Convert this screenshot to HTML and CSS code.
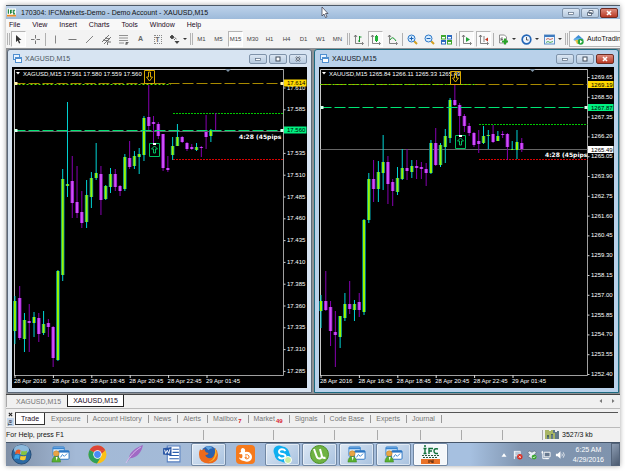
FILE: index.html
```html
<!DOCTYPE html>
<html lang="en">
<head>
    <meta charset="UTF-8">
    <meta name="viewport" content="width=device-width, initial-scale=1.0">
    <title>170304: IFCMarkets-Demo - Demo Account - XAUUSD,M15</title>
    <link rel="stylesheet" href="styles.css">
</head>
<body>
    <svg class="defs" aria-hidden="true">
        <symbol id="ico-window" viewBox="0 0 9 9">
            <rect x="0.5" y="0.5" width="6" height="5" fill="#e8f3ff" stroke="#4f8fd0"/>
            <rect x="2.5" y="3.5" width="6" height="5" fill="#fff" stroke="#4f8fd0"/>
            <path d="M2.5 4.5h6" stroke="#4f8fd0"/>
        </symbol>
        <symbol id="ico-mt4" viewBox="0 0 20 18">
            <rect x="2" y="1" width="12" height="10" rx="1" fill="#dff0ff" stroke="#3a86d0"/>
            <path d="M2 2.500h12" stroke="#3a86d0" stroke-width="2"/>
            <rect x="8" y="5" width="11" height="9" rx="1" fill="#fff" stroke="#2a76c4"/>
            <path d="M8 6h11" stroke="#2a76c4" stroke-width="2"/>
            <path d="M10 12l2-3 2 2 3-3" stroke="#3a86d0" fill="none"/>
            <circle cx="5.500" cy="8" r="3" fill="#e9a545" stroke="#b87820" stroke-width=".5"/>
            <path d="M1 17c0-4 2-6 4.500-6s4.500 2 4.500 6z" fill="#58b030" stroke="#357d18" stroke-width=".5"/>
            <path d="M5 11.500l1 4 1-4z" fill="#fff"/>
        </symbol>
    </svg>

    <div class="screen">
        <header class="titlebar">
            <svg class="app-icon" viewBox="0 0 10 9"><rect width="10" height="9" fill="#fff"/><path d="M0 7h10v2H0z" fill="#e98b2a"/><path d="M1.500 1v5M4 6V2h2M4 4h2M9 2H7.500v4H9" stroke="#16803a" stroke-width="1.300" fill="none"/></svg>
            <h1>170304: IFCMarkets-Demo - Demo Account - XAUUSD,M15</h1>
            <button class="win-btn" aria-label="Minimize"><svg viewBox="0 0 8 6"><rect x="1.500" y="2.500" width="5" height="2" fill="#fff" stroke="#5a6b80" stroke-width=".7"/></svg></button>
            <button class="win-btn" aria-label="Restore"><svg viewBox="0 0 8 6"><path d="M3 .5h4v3H3zM1.500 2.500h4v3h-4z" fill="#fff" stroke="#4d5c70" stroke-width=".8"/></svg></button>
            <button class="win-btn close" aria-label="Close"><svg viewBox="0 0 8 6"><path d="M2 1l4 4M6 1L2 5" stroke="#fff" stroke-width="1.600"/></svg></button>
            <svg class="pointer" viewBox="0 0 8 12"><path d="M1 1v9l2-2 1.500 3.500 1.500-.7L4.500 7.500H7z" fill="#fff" stroke="#334" stroke-width=".7"/></svg>
        </header>

        <nav class="menu">
            <button>File</button><button>View</button><button>Insert</button><button>Charts</button><button>Tools</button><button>Window</button><button>Help</button>
        </nav>

        <div class="toolbar">
            <i class="grip"></i>
            <button class="tool on" aria-label="Cursor"><svg viewBox="0 0 11 11"><path d="M3 1v7l1.800-1.500L6 9.500l1.300-.6L6 6h2.500z" fill="#333"/></svg></button>
            <button class="tool" aria-label="Crosshair"><svg viewBox="0 0 11 11"><path d="M5.500 1v3.500M5.500 6.500V10M1 5.500h3.500M6.500 5.500H10" stroke="#777"/></svg></button>
            <i class="sep"></i>
            <button class="tool" aria-label="Vertical line"><svg viewBox="0 0 11 11"><path d="M5.500 1.500v8" stroke="#888"/></svg></button>
            <button class="tool" aria-label="Horizontal line"><svg viewBox="0 0 11 11"><path d="M1.500 5.500h8" stroke="#777"/></svg></button>
            <button class="tool" aria-label="Trendline"><svg viewBox="0 0 11 11"><path d="M2 9l7-7" stroke="#666" stroke-width=".8"/></svg></button>
            <button class="tool" aria-label="Channel"><svg viewBox="0 0 11 11"><path d="M1 8l7-7M3 10l7-7M2 6l6 1M4 4l5 1M6.500 8H10M6.500 8v3" stroke="#555" stroke-width=".8" fill="none"/></svg></button>
            <button class="tool" aria-label="Fibonacci"><svg viewBox="0 0 11 11"><path d="M1 1.500h9M1 4h9M1 6.500h9M1 9h5" stroke="#777" stroke-width=".8"/><path d="M8 11V8.500h2.500M8 9.800h2" stroke="#444" stroke-width=".8" fill="none"/></svg></button>
            <button class="tool letter">A</button>
            <button class="tool letter"><span class="dotted">T</span></button>
            <button class="tool drop" aria-label="Arrows"><svg viewBox="0 0 11 11"><path d="M3 1l2 2-2 2-2-2zM4.500 4.500l1.500 1.500M5.500 3.500l2 1.500" fill="#444" stroke="#444" stroke-width=".8"/><path d="M5.500 7h5L8 10z" fill="#444"/></svg></button>
            <i class="grip"></i>
            <button class="tool tf">M1</button>
            <button class="tool tf">M5</button>
            <button class="tool tf on">M15</button>
            <button class="tool tf">M30</button>
            <button class="tool tf">H1</button>
            <button class="tool tf">H4</button>
            <button class="tool tf">D1</button>
            <button class="tool tf">W1</button>
            <button class="tool tf">MN</button>
            <i class="grip"></i>
            <button class="tool" aria-label="Bar chart"><svg viewBox="0 0 11 11"><path d="M2.500 1v8.500H10M1 3l1.500-2L4 3M9 8l1.500 1.500L9 11" stroke="#666" stroke-width=".8" fill="none"/><path d="M6.500 2v6M6.500 3h2M5 7h1.500" stroke="#19962c"/></svg></button>
            <button class="tool on" aria-label="Candlesticks"><svg viewBox="0 0 11 11"><path d="M2.500 1v8.500H10M1 3l1.500-2L4 3M9 8l1.500 1.500L9 11" stroke="#666" stroke-width=".8" fill="none"/><path d="M6.500 1v7" stroke="#19962c"/><path d="M5 2h3v5H5z" fill="#22b53a"/></svg></button>
            <button class="tool" aria-label="Line chart"><svg viewBox="0 0 11 11"><path d="M2.500 1v8.500H10M1 3l1.500-2L4 3M9 8l1.500 1.500L9 11" stroke="#666" stroke-width=".8" fill="none"/><path d="M3 6q2.500-5 6 1" stroke="#19962c" fill="none"/></svg></button>
            <i class="sep"></i>
            <button class="tool" aria-label="Zoom in"><svg viewBox="0 0 11 11"><path d="M7 7l3 3" stroke="#d3a020" stroke-width="2"/><circle cx="4.500" cy="4.500" r="3.500" fill="#d8edff" stroke="#2b78c8"/><path d="M2.500 4.500h4M4.500 2.500v4" stroke="#1a62b4"/></svg></button>
            <button class="tool" aria-label="Zoom out"><svg viewBox="0 0 11 11"><path d="M7 7l3 3" stroke="#d3a020" stroke-width="2"/><circle cx="4.500" cy="4.500" r="3.500" fill="#d8edff" stroke="#2b78c8"/><path d="M2.500 4.500h4" stroke="#1a62b4"/></svg></button>
            <button class="tool" aria-label="Tile windows"><svg viewBox="0 0 11 11"><path d="M0 1h5v4.500H0zM6 6h5v4.500H6z" fill="#3ea62e"/><path d="M6 1h5v4.500H6zM0 6h5v4.500H0z" fill="#2b69c0"/><path d="M1 3h3v1.500H1zM7 3h3v1.500H7zM1 8h3v1.500H1zM7 8h3v1.500H7z" fill="#fff"/></svg></button>
            <i class="sep"></i>
            <button class="tool on" aria-label="Auto scroll"><svg viewBox="0 0 11 11"><path d="M2.500 1v8.500H10M1 3l1.500-2L4 3M9 8l1.500 1.500L9 11" stroke="#666" stroke-width=".8" fill="none"/><path d="M5 3l4 2.500L5 8z" fill="#22a53a"/></svg></button>
            <button class="tool on" aria-label="Chart shift"><svg viewBox="0 0 11 11"><path d="M2.500 1v8.500H10M1 3l1.500-2L4 3M9 8l1.500 1.500L9 11M6 2v6" stroke="#666" stroke-width=".8" fill="none"/><path d="M10 3.500v4L7 5.500z" fill="#c8351e"/></svg></button>
            <i class="sep"></i>
            <button class="tool drop" aria-label="Indicators"><svg viewBox="0 0 11 11"><path d="M1.500 1h5l2 2v6h-7z" fill="#fff" stroke="#777" stroke-width=".8"/><path d="M3 7V4h2M3 5.500h2" stroke="#555" stroke-width=".8" fill="none"/><path d="M7 4.500v6M4 7.500h6" stroke="#28a428" stroke-width="2.200"/></svg></button>
            <button class="tool drop" aria-label="Periods"><svg viewBox="0 0 11 11"><circle cx="5.500" cy="5.500" r="4.300" fill="#eef6ff" stroke="#2467b8" stroke-width="1.700"/><path d="M5.500 3v3h2" stroke="#333" stroke-width=".8" fill="none"/></svg></button>
            <button class="tool drop" aria-label="Templates"><svg viewBox="0 0 11 11"><rect x=".5" y="1" width="10" height="9" fill="#eef6ff" stroke="#5c8fc8"/><path d="M.5 2h10" stroke="#3d79bd" stroke-width="2"/><path d="M2 5.500l2-1 2 1 3-1" stroke="#c04a30" stroke-width=".8" fill="none"/><path d="M2 8.500l2-1 2 1 3-1" stroke="#2f9a3a" stroke-width=".8" fill="none"/></svg></button>
            <i class="grip"></i>
            <button class="auto"><svg viewBox="0 0 11 11"><path d="M1 5l4.500-4L10 5z" fill="#3f8fd6"/><ellipse cx="5.500" cy="5.500" rx="5" ry="1.600" fill="#67aee8"/><path d="M2 6h7l-3 4H4z" fill="#e8c34c"/><circle cx="7.700" cy="7.700" r="3" fill="#24a53c"/><path d="M7 6v3.500l2.500-1.700z" fill="#fff"/></svg>AutoTrading</button>
        </div>

        <main class="workspace">
            <section class="chart-window">
                <div class="chart-title">
                    <svg class="chart-icon"><use href="#ico-window"/></svg>
                    <h2>XAGUSD,M15</h2>
                    <button class="win-btn" aria-label="Minimize"><svg viewBox="0 0 8 6"><rect x="1.500" y="2.500" width="5" height="2" fill="#fff" stroke="#5a6b80" stroke-width=".7"/></svg></button>
                    <button class="win-btn" aria-label="Maximize"><svg viewBox="0 0 8 6"><rect x="2" y="1" width="4" height="4" fill="#fff" stroke="#3f4b5a"/></svg></button>
                    <button class="win-btn" aria-label="Close"><svg viewBox="0 0 8 6"><path d="M2 1l4 4M6 1L2 5" stroke="#4d5968" stroke-width="1.800"/><path d="M2 1l4 4M6 1L2 5" stroke="#fff" stroke-width=".6"/></svg></button>
                </div>
                <svg class="chart" id="xag" viewBox="0 0 295 321"></svg>
            </section>
            <section class="chart-window active">
                <div class="chart-title">
                    <svg class="chart-icon"><use href="#ico-window"/></svg>
                    <h2>XAUUSD,M15</h2>
                    <button class="win-btn" aria-label="Minimize"><svg viewBox="0 0 8 6"><rect x="1.500" y="2.500" width="5" height="2" fill="#fff" stroke="#5a6b80" stroke-width=".7"/></svg></button>
                    <button class="win-btn" aria-label="Maximize"><svg viewBox="0 0 8 6"><rect x="2" y="1" width="4" height="4" fill="#fff" stroke="#3f4b5a"/></svg></button>
                    <button class="win-btn close" aria-label="Close"><svg viewBox="0 0 8 6"><path d="M2 1l4 4M6 1L2 5" stroke="#fff" stroke-width="1.600"/></svg></button>
                </div>
                <svg class="chart" id="xau" viewBox="0 0 295 321"></svg>
            </section>
        </main>

        <div class="chart-tabs">
            <button>XAGUSD,M15</button>
            <button class="current">XAUUSD,M15</button>
            <span class="scroll"><svg viewBox="0 0 16 6"><path d="M3 1v4L.5 3zM13 1v4l2.500-2z" fill="#777"/></svg></span>
        </div>

        <div class="terminal">
            <div class="dock">
                <button aria-label="Close terminal"><svg viewBox="0 0 6 6"><path d="M1 1l4 4M5 1L1 5" stroke="#222" stroke-width="1.300"/></svg></button>
                <span>Te</span>
            </div>
            <div class="terminal-tabs">
                <button class="current">Trade</button>
                <button>Exposure</button>
                <button>Account History</button>
                <button>News</button>
                <button>Alerts</button>
                <button>Mailbox<sub>7</sub></button>
                <button>Market<sub>49</sub></button>
                <button>Signals</button>
                <button>Code Base</button>
                <button>Experts</button>
                <button>Journal</button>
            </div>
        </div>

        <footer class="status">
            <span>For Help, press F1</span><span></span><span></span><span></span><span></span><span></span><span></span><span></span>
            <span class="traffic"><svg viewBox="0 0 15 9"><path d="M1 0v9M3 0v7M5 1v8M7 0v5M9 3v6" stroke="#8a9c28" stroke-width="1.400"/><path d="M3 5v4M7 4v5M9 0v3M11 2v7M13 1v8" stroke="#27485e" stroke-width="1.400"/></svg>3527/3 kb</span>
        </footer>

        <div class="taskbar">
            <button class="start" aria-label="Start"><svg viewBox="0 0 22 22"><circle cx="11" cy="11" r="10" fill="#2d69a3" stroke="#234a74"/><ellipse cx="11" cy="6" rx="8" ry="5" fill="#8db9dc"/><path d="M5 7q3-2 5-.5l-.7 4.200q-2-1.300-5 0z" fill="#ee5a24"/><path d="M11 7q3 1.500 6-.3l-.8 4.300q-3 1.500-5.900.1z" fill="#86c440"/><path d="M4 11.700q3-1.300 5 0L8.300 16q-2-1.500-5 0z" fill="#3da5e8"/><path d="M10 12.200q3 1.400 5.900 0l-.8 4q-3 1.800-5.800.1z" fill="#fbcb2e"/></svg></button>
            <button class="task" aria-label="MetaTrader"><svg><use href="#ico-mt4"/></svg></button>
            <button class="task" aria-label="Chrome"><svg viewBox="0 0 18 18"><circle cx="9" cy="9" r="8.500" fill="#fbc116"/><path d="M9 9L1.600 4.700A8.500 8.500 0 0 1 16.400 5H9z" fill="#dc4437"/><path d="M1.600 4.700A8.500 8.500 0 0 0 8.500 17.500L12.500 11 9 9z" fill="#2da05a"/><path d="M9 5h7.400L12 9z" fill="#dc4437"/><circle cx="9" cy="9" r="4" fill="#fff"/><circle cx="9" cy="9" r="3.200" fill="#4a8bf5"/></svg></button>
            <button class="task" aria-label="Notes"><svg viewBox="0 0 18 18"><path d="M1 17L4 12C4 7 11 2 17 0c-1 6-5 12-12 12.500z" fill="#a069c4"/><path d="M1 17C5 10 10 5 15 2" stroke="#e2c8f2" fill="none" stroke-width=".8"/></svg></button>
            <button class="task" aria-label="Word"><svg viewBox="0 0 18 18"><path d="M5 1h12v15H5z" fill="#fff" stroke="#567fc0"/><path d="M10 4h6M10 7h6M7 10h9M7 13h9" stroke="#2c5fae"/><path d="M1 3l8-1v8l-8-1z" fill="#2b57a5"/><path d="M2.500 4.500l1 3.500 1.500-3 1.500 3 1-4" stroke="#fff" fill="none" stroke-width=".9"/></svg></button>
            <button class="task open" aria-label="Firefox"><svg viewBox="0 0 18 18"><circle cx="9.500" cy="8.500" r="7.500" fill="#2b62ae"/><path d="M6 2q4-2 7 1-3 0-4 2z" fill="#5fa5e0"/><path d="M1 4q1 1 2 1 1-1 2.500-1-.5 2 1.500 3 2 0 2 1-1 1.500-3 1.500 1 3 4 3 4 0 5-5 1-2 0-5 3 3 3 7 0 8-9 8Q0 17 0 9q0-3 1-5z" fill="#ec6a1c"/><path d="M15 3q3 4 1 8-2 5-7 5 8-3 6-13z" fill="#fbb829"/></svg></button>
            <button class="task" aria-label="UC Browser"><svg viewBox="0 0 19 19"><rect width="19" height="19" rx="4" fill="#f67a1c"/><path d="M6 3q4 0 3 4 4-1 6 2t0 6q-3 3-7 1-5-1-5-4 1 2 3 1 1-2 0-4-2 1-3-1 1 0 2-1-1-2 1-4z" fill="#fff"/><path d="M9 10q3-1 4 1t-2 3q-2 0-2-2l2 .3" stroke="#f67a1c" fill="none"/></svg></button>
            <button class="task open" aria-label="Skype"><svg viewBox="0 0 19 19"><circle cx="6" cy="6" r="5.500" fill="#0faff0"/><circle cx="12" cy="12" r="5.500" fill="#0faff0"/><circle cx="9" cy="9" r="7.500" fill="#0faff0"/><path d="M12.500 6Q11 4 8.500 4.300 5.500 5 6 7t3.500 2q3.500.7 3 2.700-1 2-4 1.800-2 0-3-2" stroke="#fff" stroke-width="1.900" fill="none"/><circle cx="15" cy="15" r="3.500" fill="#c9eba0" stroke="#fff"/></svg></button>
            <button class="task open" aria-label="uTorrent"><svg viewBox="0 0 19 19"><circle cx="9.500" cy="9.500" r="9" fill="#6fb343" stroke="#4f9128"/><path d="M4 4l2.500 7q1 3 3.500 2.500 2.500-.5 1.500-4L10 4M11.500 10q1 4 4 2.500" stroke="#fff" stroke-width="2" fill="none"/></svg></button>
            <button class="task open" aria-label="MetaTrader"><svg><use href="#ico-mt4"/></svg></button>
            <button class="task open" aria-label="MetaTrader"><svg><use href="#ico-mt4"/></svg></button>
            <button class="task open front" aria-label="IFC Markets"><svg viewBox="0 0 19 19"><path d="M2.500 3.500h3M4 3.500v5M2.500 8.500h3M8 9V3.500h4M8 6h3M17 4q-4-1-4 2t4 2.500" stroke="#0f7038" stroke-width="1.400" fill="none"/><circle cx="4" cy="1" r="1" fill="#0f7038"/><path d="M1 10.500h17M2 12.500h15" stroke="#2b5c3e" stroke-dasharray="2 1"/><path d="M0 14h19v5H0z" fill="#ea7228"/><path d="M8 15v3M10 15v2h2M12 14.500V18" stroke="#4d2208" fill="none"/></svg></button>
            <div class="tray">
                <svg viewBox="0 0 6 6"><path d="M1.500 4L3 2l1.500 2z" fill="#fff"/></svg>
                <svg viewBox="0 0 11 11"><path d="M1.500 1v9" stroke="#fff"/><path d="M2 1.500h6v5H2z" fill="#b9c6d6" stroke="#fff" stroke-width=".8"/><circle cx="7.500" cy="7.500" r="3" fill="#d92c20"/><path d="M6.300 6.300l2.400 2.400M8.700 6.300L6.300 8.700" stroke="#fff" stroke-width=".8"/></svg>
                <svg viewBox="0 0 11 11"><path d="M3 1l2.500 1.500L8 1l2.500 2L8 5l2 2-4.500 3L1 7l2-2L.5 3z" fill="#e8eef5" stroke="#4b5a6b" stroke-width=".6"/><circle cx="7.800" cy="7.800" r="2.700" fill="#39a72e"/><path d="M6.500 7.800l1 1 1.600-2" stroke="#fff" stroke-width=".8" fill="none"/></svg>
                <svg viewBox="0 0 11 11"><path d="M3.500 2.500h6.500v5H3.500z" fill="#66788f" stroke="#fff"/><path d="M1.500 1v4M.5 2.500h2M2 5v4.500h6M5 9.500h4" stroke="#fff" fill="none"/></svg>
                <svg viewBox="0 0 11 11"><path d="M1 4h2l3-2.500v8L3 7H1z" fill="#fff"/><path d="M7.500 4q1.200 1.500 0 3M9 2.500q2.500 3 0 6" stroke="#fff" fill="none" stroke-width=".8"/></svg>
                <time>6:25 AM<br>4/29/2016</time>
                <button class="desktop" aria-label="Show desktop"></button>
            </div>
        </div>
    </div>

    <script src="charts.js"></script>
</body>
</html>
```

FILE: styles.css
```css
* {
    box-sizing: border-box;
}
body {
    margin: 0;
    padding: 5px 5px 5px 6px;
    background: #fff;
    font-family: "Liberation Sans", Arial, sans-serif;
    font-size: 7px;
    line-height: 10px;
    color: #111;
}
button {
    flex: none;
    margin: 0;
    padding: 0;
    border: 0;
    background: none;
    font: inherit;
    color: inherit;
    white-space: nowrap;
}
h1, h2 {
    margin: 0;
    font-size: 7px;
    font-weight: normal;
    flex: 1;
    white-space: nowrap;
}
svg {
    display: block;
    flex: none;
}
.defs {
    display: none;
}
.screen {
    background: #f0f0f0;
    box-shadow: 0 0 5px rgba(0, 0, 0, 0.35);
    overflow: hidden;
}

/* title bar */
.titlebar {
    position: relative;
    display: flex;
    align-items: center;
    gap: 1px;
    height: 14px;
    padding: 0 2px 0 1px;
    border-top: 1px solid #4d5a68;
    background: linear-gradient(#bdd2ea, #9dbada);
}
.app-icon {
    width: 9px;
    height: 9px;
    margin-right: 4px;
}
.pointer {
    position: absolute;
    left: 315px;
    top: 0;
    width: 8px;
    height: 12px;
}
.win-btn {
    display: flex;
    align-items: center;
    justify-content: center;
    width: 18px;
    height: 10px;
    border: 1px solid #7f93aa;
    border-radius: 2px;
    background: linear-gradient(#dbe6f2, #b5c9de);
}
.win-btn svg {
    width: 8px;
    height: 6px;
}
.win-btn.close {
    border-color: #6d2b22;
    background: linear-gradient(#dc8a7c, #b93a26);
}

/* menu */
.menu {
    display: flex;
    align-items: center;
    gap: 12px;
    height: 11px;
    padding-left: 3px;
    background: #f8f8f8;
    color: #1c0a24;
}

/* toolbar */
.toolbar {
    display: flex;
    align-items: center;
    height: 18px;
    padding-left: 1px;
    overflow: hidden;
    background: #f3f3f3;
}
.grip {
    flex: none;
    width: 3px;
    height: 12px;
    margin-right: 1px;
    border: 1px solid #b4b4b4;
    border-width: 0 1px;
}
.sep {
    flex: none;
    width: 1px;
    height: 13px;
    margin-right: 2px;
    background: #b0b0b0;
}
.tool {
    display: flex;
    align-items: center;
    justify-content: center;
    width: 15px;
    height: 16px;
    margin-right: 2px;
}
.tool svg {
    width: 11px;
    height: 11px;
}
.tool.on {
    border: 1px solid #b5b5b5;
    border-right-color: #fff;
    border-bottom-color: #fff;
    background: #fafafa;
}
.tool.drop {
    width: 21px;
    gap: 3px;
}
.tool.drop::after {
    content: "";
    border: 2px solid transparent;
    border-top-color: #333;
    border-bottom: 0;
}
.letter {
    font-weight: bold;
    color: #666;
}
.dotted {
    width: 8px;
    height: 9px;
    border: 1px dotted #888;
    line-height: 8px;
}
.tf {
    font-size: 6px;
    color: #444;
}
.auto {
    display: flex;
    align-items: center;
    gap: 3px;
    height: 16px;
    padding-left: 3px;
    border: 1px solid #b5b5b5;
    border-right: 0;
    background: #fafafa;
}
.auto svg {
    width: 11px;
    height: 11px;
}

/* chart windows */
.workspace {
    display: flex;
    gap: 2px;
    padding: 1px;
    background: #8f9194;
}
.chart-window {
    flex: 1;
    min-width: 0;
    padding: 0 4px 4px;
    border: 1px solid #5b6878;
    border-radius: 3px 3px 0 0;
    background: #d7e4f2;
}
.chart-window.active {
    border-color: #1c6a80;
    background: #b9d1ea;
}
.chart-title {
    display: flex;
    align-items: center;
    gap: 2px;
    height: 17px;
}
.chart-title h2 {
    color: #4a5560;
}
.active .chart-title h2 {
    color: #10141a;
}
.chart-icon {
    width: 9px;
    height: 9px;
    margin: 0 1px;
}
.chart {
    width: 100%;
    height: auto;
    background: #000;
}
.chart text {
    font-size: 6px;
    fill: #fff;
    dominant-baseline: central;
}
.chart .tag {
    fill: #000;
}
.chart .timer {
    font-family: "DejaVu Sans", sans-serif;
    font-weight: bold;
}

/* tabs under the charts */
.chart-tabs {
    display: flex;
    height: 14px;
    border-top: 1px solid #444;
    color: #777;
}
.chart-tabs button {
    height: 12px;
    padding: 1px 6px 0 9px;
    border-left: 1px solid #aaa;
}
.chart-tabs .current {
    padding: 1px 5px 0;
    border: 1px solid #222;
    border-top: 0;
    background: #fff;
    color: #1c0a24;
}
.scroll {
    margin-left: auto;
    padding: 3px 5px;
}
.scroll svg {
    width: 16px;
    height: 6px;
}

/* terminal */
.terminal {
    display: flex;
    height: 20px;
    padding: 3px 2px 1px 0;
    border-top: 1px solid #bbb;
    border-bottom: 1px solid #bbb;
}
.dock {
    display: flex;
    flex-direction: column;
    align-items: center;
    gap: 1px;
    width: 9px;
    overflow: hidden;
}
.dock svg {
    width: 5px;
    height: 5px;
}
.dock span {
    width: 7px;
    height: 8px;
    background: #c5d7ec;
    writing-mode: vertical-rl;
    transform: rotate(180deg);
    font-size: 6px;
    line-height: 7px;
}
.terminal-tabs {
    display: flex;
    flex: 1;
    align-items: flex-start;
    border-top: 1px solid #555;
    color: #777;
}
.terminal-tabs button {
    padding: 1px 5px 0 6px;
}
.terminal-tabs button::after {
    content: "";
    display: inline-block;
    width: 1px;
    height: 8px;
    margin: 0 -6px -2px 6px;
    background: #999;
}
.terminal-tabs .current {
    padding: 1px 5px 0;
    border: 1px solid #333;
    border-top: 0;
    background: #fff;
    color: #1c0a24;
}
.terminal-tabs .current::after {
    display: none;
}
sub {
    margin-left: 1px;
    font-size: 6px;
    font-weight: bold;
    line-height: 0;
    vertical-align: -2px;
    color: #d8222c;
}

/* status bar */
.status {
    display: grid;
    grid-template-columns: 1fr 70px 61px 43px 43px 41px 41px 40px 78px;
    height: 14px;
    padding: 2px 0;
}
.status span + span {
    border-left: 1px solid #aaa;
}
.traffic {
    display: flex;
    gap: 2px;
    padding-left: 2px;
}
.traffic svg {
    width: 15px;
    height: 9px;
}

/* taskbar */
.taskbar {
    display: flex;
    gap: 2px;
    height: 24px;
    border-top: 1px solid #46566a;
    background: linear-gradient(90deg, #7f8fa6, #a3b9d6 70px, #a6c0e0);
}
.start {
    width: 35px;
    padding-left: 5px;
}
.start svg {
    width: 21px;
    height: 21px;
}
.task {
    display: flex;
    align-items: center;
    justify-content: center;
    width: 35px;
}
.task svg {
    width: 19px;
    height: 19px;
}
.task.open {
    border: 1px solid #7087a3;
    border-radius: 2px;
    background: linear-gradient(135deg, #dbe7f4, #a9c2df);
    box-shadow: inset 0 0 0 1px rgba(255, 255, 255, 0.5);
}
.task.front {
    background: #f4f7fa;
}
.tray {
    display: flex;
    flex: 1;
    align-items: center;
    justify-content: flex-end;
    gap: 4px;
    background: linear-gradient(90deg, #a6c0e0 20px, #8196b1 70px, #7f93ad);
    color: #fff;
}
.tray svg {
    width: 10px;
    height: 10px;
}
.tray time {
    margin: 0 3px 0 4px;
    text-align: center;
    white-space: nowrap;
}
.desktop {
    width: 9px;
    height: 23px;
    border: 1px solid #55657b;
    background: linear-gradient(135deg, #8d9db3, #4c5b70);
}
```

FILE: charts.js
```js
const NS = 'http://www.w3.org/2000/svg';
const STEP = 4.78;

// each candle: [direction, body top, body bottom, high, low]
const silver = {
    id: 'xag',
    header: 'XAGUSD,M15  17.561 17.580 17.559 17.560',
    headerX: 11, left: 2.5, right: 271.5, labelX: 275, start: 2.9,
    prices: ['17.610', '17.585', '', '17.535', '17.510', '17.485', '17.460', '17.435', '17.410', '17.385', '17.360', '17.335', '17.310', '17.285'],
    priceY: 20.5, priceStep: 21.8, marker: 216, signalX: 132, signalY: 3, buyX: 137, buyY: 76,
    stop: 16.5, target: 17.5, entry: 63.5, bid: 64.5, bandX: 161, bandTop: 46.5, bandEnd: 159, timerX: 227, timerY: 69,
    tags: [['17.614', 16, '#ffd800'], ['17.560', 63, '#00f080']],
    candles: [
        [1,234,264,229,277],[0,231,271,219,273],[1,253,272,246,285],[0,254,256,237,285],[1,250,256,245,270],
        [0,251,267,246,275],[1,257,266,244,268],[0,256,260,252,270],[0,260,291,259,300],[1,204,293,203,294],
        [1,112,208,102,214],[1,117,119,35,130],[0,114,136,89,151],[0,135,146,99,151],[0,145,156,124,161],
        [1,128,155,113,161],[1,111,130,105,141],[1,106,111,76,113],[0,107,133,99,148],[1,119,132,118,133],
        [1,107,120,101,126],[0,107,120,102,124],[0,119,124,118,129],[1,90,122,87,124],[0,91,100,74,102],
        [1,89,99,84,102],[1,87,90,81,107],[1,51,88,49,94],[0,50,59,18,63],[0,55,57,49,78],
        [0,57,69,55,72],[0,67,101,67,104],[0,101,103,89,105],[1,79,88,70,93],[1,70,79,57,79],
        [0,70,75,69,76],[0,76,82,75,84],[0,80,82,77,83],[1,80,83,76,84],[0,80,81,79,90],
        [0,65,70,48,82],[1,63,69,62,75],[0,63,64,46,64]
    ]
};

const gold = {
    id: 'xau',
    header: 'XAUUSD,M15  1265.84 1266.11 1265.33 1265.49',
    headerX: 10, left: 1.5, right: 268.5, labelX: 272, start: 2,
    prices: ['1269.65', '1268.50', '1267.35', '1266.20', '1265.05', '1263.90', '1262.75', '1261.60', '1260.45', '1259.30', '1258.15', '1257.00', '1255.85', '1254.70', '1253.55', '1252.40'],
    priceY: 10, priceStep: 19.8, marker: 213.5, signalX: 131, signalY: 4, buyX: 136, buyY: 68,
    stop: 17.5, target: 17.5, entry: 40.5, bid: 82.5, bandX: 160, bandTop: 57.5, bandEnd: 158, timerX: 226, timerY: 87,
    tags: [['1269.19', 17.5, '#ffd800'], ['1267.87', 40.5, '#00f080'], ['1265.49', 82.5, '#ffffff']],
    candles: [
        [1,234,244,228,261],[0,234,243,204,244],[0,240,264,234,279],[0,265,268,244,300],[1,249,270,249,281],
        [1,237,251,226,254],[0,237,242,214,247],[1,237,243,233,254],[0,235,243,226,250],[1,153,245,152,248],
        [1,112,153,106,156],[0,112,122,93,135],[1,105,122,94,135],[1,95,106,68,123],[0,95,117,89,137],
        [0,115,124,112,139],[1,111,125,100,128],[1,101,112,82,113],[0,101,104,82,113],[1,99,105,93,111],
        [0,99,101,93,112],[0,100,102,95,112],[0,102,106,96,119],[1,76,106,73,107],[0,76,98,61,99],
        [1,78,98,76,100],[1,69,80,62,96],[1,33,71,31,76],[0,33,38,18,39],[0,38,49,36,69],
        [0,49,59,47,65],[0,59,66,56,69],[0,66,78,65,80],[0,74,77,63,86],[1,69,76,59,77],
        [1,68,69,63,82],[0,67,75,58,76],[1,69,74,64,74],[0,67,68,64,71],[0,67,80,66,93],
        [1,82,83,74,83],[1,75,83,63,92],[0,76,82,71,85]
    ]
};

const times = ['28 Apr 2016', '28 Apr 16:45', '28 Apr 18:45', '28 Apr 20:45', '28 Apr 22:45', '29 Apr 01:45'];

function draw(c) {
    const svg = document.getElementById(c.id);

    function add(name, attrs, text) {
        const el = document.createElementNS(NS, name);
        for (const key in attrs) el.setAttribute(key, attrs[key]);
        if (text) el.textContent = text;
        svg.appendChild(el);
    }
    function rect(x, y, width, height, fill) {
        add('rect', { x, y, width, height, fill });
    }
    function line(x1, x2, y, stroke, dash) {
        add('path', { d: `M${x1} ${y}H${x2}`, stroke, 'stroke-dasharray': dash || 'none' });
    }

    // frame and time axis
    add('path', { d: `M${c.left} 309V2.500H${c.right}`, stroke: '#c8c8c8', fill: 'none' });
    add('path', { d: `M${c.left} 308.500H${c.right}V2`, stroke: '#a0a0a0', fill: 'none' });
    times.forEach((t, i) => {
        const x = c.left + i * 38.4;
        rect(x, 308, 1, 3, '#ddd');
        add('text', { x: x - 0.5, y: 314 }, t);
    });
    c.prices.forEach((p, i) => {
        const y = c.priceY + i * c.priceStep;
        if (p) add('text', { x: c.labelX, y }, p);
        rect(c.right, y, 2, 1, '#ccc');
    });

    // levels behind the candles
    line(c.left, c.right, c.bid, '#666');
    line(c.bandX, c.right, c.bandTop, '#00c800', '2 1');
    line(c.bandX, c.right, 92.5, '#d80000', '2 1');

    c.candles.forEach(([up, top, bottom, high, low], i) => {
        const x = c.start + i * STEP;
        rect(x - 0.5, high, 1, low - high, up ? '#00d4d4' : '#8600b0');
        rect(x - 1.8, top, 3.6, Math.max(bottom - top, 1), up ? '#00909a' : '#8a12b8');
        rect(x - 1, top, 2, Math.max(bottom - top, 1), up ? '#98f800' : '#d050f8');
    });

    line(c.left, c.right, c.stop, '#a88a00', '11 3');
    line(c.left, c.bandEnd, c.target, '#60f000', '2 2');
    line(c.left, c.right, c.entry, '#00e474', '11 3');
    [c.left, c.right - 3].forEach(x => {
        rect(x, c.entry - 1.5, 3, 3, '#d8ffec');
        if (c.id === 'xag') rect(x, c.stop - 1.5, 3, 3, '#fff4b0');
    });

    // header
    add('path', { d: `M${c.headerX - 7} 5h4l-2 2.500z`, fill: '#fff' });
    add('path', { d: `M${c.marker - 3} 2h6l-3 3z`, fill: '#7f92a4' });
    add('text', { x: c.headerX, y: 7 }, c.header);

    // sell and buy signals
    add('path', {
        d: `M${c.signalX + 0.5} ${c.signalY + 0.5}h10v13h-10zM${c.signalX + 4.500} ${c.signalY + 2}h2v5h2l-3 4-3-4h2z`,
        stroke: '#d8a800', fill: 'none'
    });
    add('path', {
        d: `M${c.buyX + 0.5} ${c.buyY + 0.5}h10v13h-10zM${c.buyX + 4.500} ${c.buyY + 10}h2v-4h2l-3-3-3 3h2z`,
        stroke: '#00c060', fill: 'none'
    });
    rect(c.buyX + 4, c.buyY, 3, 2, '#fff');

    add('text', { x: c.timerX, y: c.timerY, class: 'timer' }, '4:28 (45pips');

    c.tags.forEach(([text, y, fill]) => {
        rect(c.right + 0.5, y - 3.5, 294 - c.right, 7, fill);
        add('text', { x: c.labelX, y, class: 'tag' }, text);
    });
}

draw(silver);
draw(gold);
```
